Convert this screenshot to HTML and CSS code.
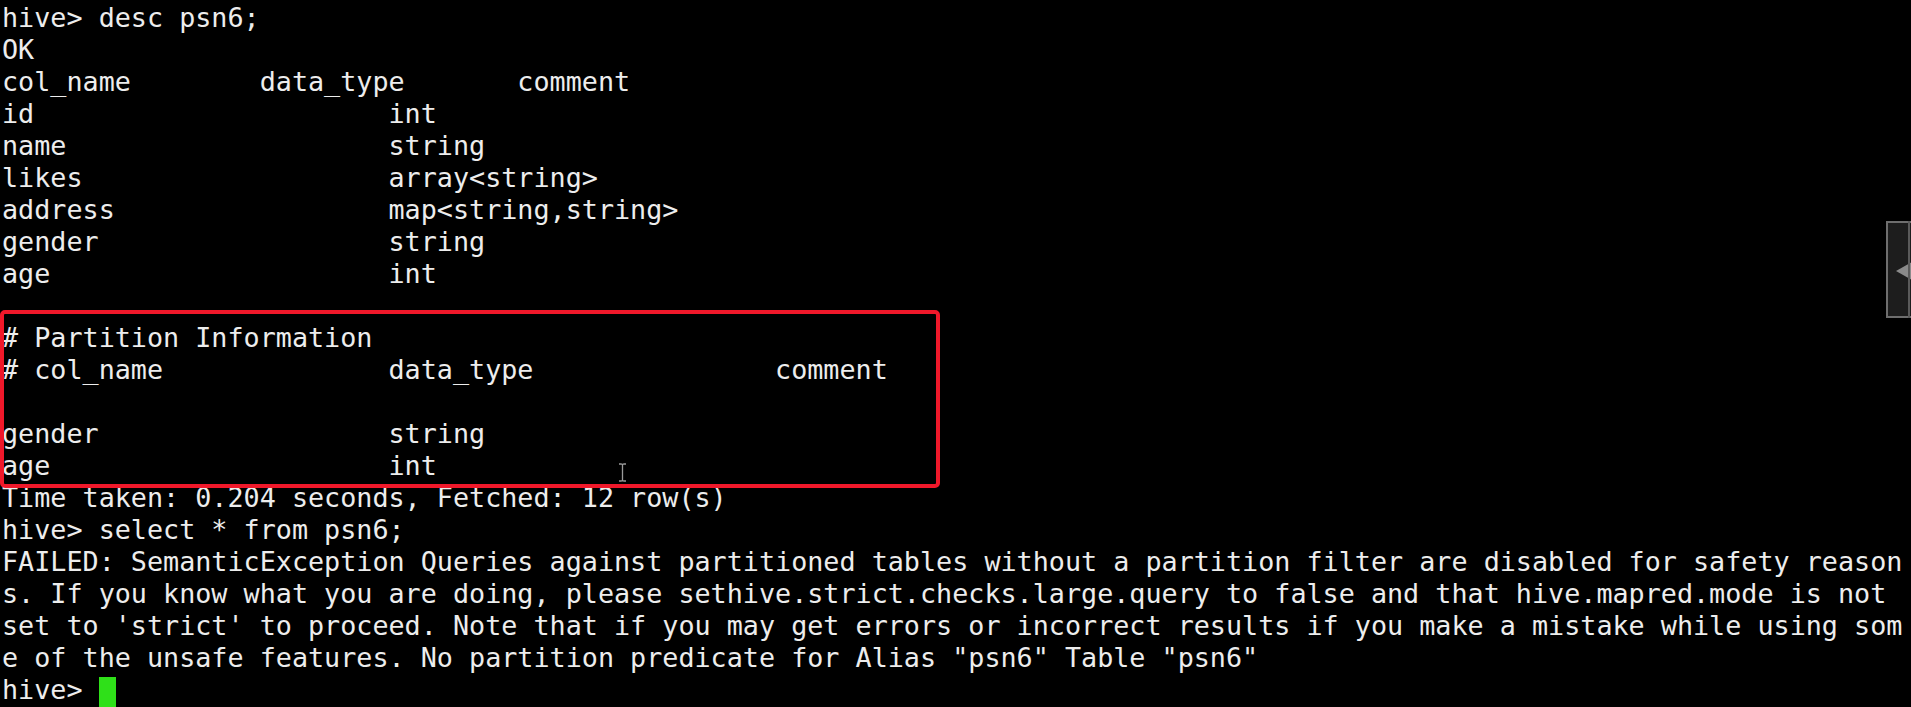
FILE: index.html
```html
<!DOCTYPE html>
<html lang="en">
<head>
<meta charset="utf-8">
<title>hive terminal</title>
<link rel="stylesheet" href="styles.css">
</head>
<body>
<div class="term">
<pre class="out">hive&gt; desc psn6;
OK
col_name        data_type       comment
id                      int
name                    string
likes                   array&lt;string&gt;
address                 map&lt;string,string&gt;
gender                  string
age                     int

# Partition Information
# col_name              data_type               comment

gender                  string
age                     int
Time taken: 0.204 seconds, Fetched: 12 row(s)
hive&gt; select * from psn6;
FAILED: SemanticException Queries against partitioned tables without a partition filter are disabled for safety reason
s. If you know what you are doing, please sethive.strict.checks.large.query to false and that hive.mapred.mode is not
set to 'strict' to proceed. Note that if you may get errors or incorrect results if you make a mistake while using som
e of the unsafe features. No partition predicate for Alias "psn6" Table "psn6"
hive&gt; <span class="cursor"></span></pre>
<div class="highlight"></div>
<svg class="ibeam" width="9" height="19" viewBox="0 0 9 19"><path d="M1 1h2.5M5.5 1H8M4.5 1.5v16M1 18h2.5M5.5 18H8M3.5 1.2c.6 0 1 .3 1 .8M5.5 1.2c-.6 0-1 .3-1 .8M3.5 17.8c.6 0 1-.3 1-.8M5.5 17.8c-.6 0-1-.3-1-.8" stroke="#9a9a9a" stroke-width="1.3" fill="none"/></svg>
<div class="sidetab"><span class="arrow"></span></div>
</div>
</body>
</html>
```
FILE: styles.css
```css
html, body {
  margin: 0;
  padding: 0;
  background: #000;
  overflow: hidden;
}
.term {
  position: relative;
  width: 1911px;
  height: 707px;
  background: #000;
  overflow: hidden;
}
.out {
  margin: 0;
  padding: 2px 0 0 2px;
  font-family: "DejaVu Sans Mono", monospace;
  font-size: 26.75px;
  line-height: 32px;
  color: #ededed;
  white-space: pre;
}
.cursor {
  display: inline-block;
  width: 17px;
  height: 32px;
  margin-top: 3px;
  vertical-align: top;
  background: #2fe019;
}
.highlight {
  position: absolute;
  left: 0;
  top: 310px;
  width: 940px;
  height: 178px;
  box-sizing: border-box;
  border: 4px solid #f0182a;
  border-radius: 5px;
}
.ibeam {
  position: absolute;
  left: 618px;
  top: 463px;
}
.sidetab {
  position: absolute;
  left: 1886px;
  top: 221px;
  width: 30px;
  height: 97px;
  box-sizing: border-box;
  border: 2px solid #6e6e6e;
  background: #1d1d1d;
}
.sidetab::after {
  content: "";
  position: absolute;
  left: 20px;
  top: -2px;
  width: 2px;
  height: 97px;
  background: #5a5a5a;
}
.arrow {
  position: absolute;
  left: 8px;
  top: 39px;
  width: 0;
  height: 0;
  border-top: 9px solid transparent;
  border-bottom: 9px solid transparent;
  border-right: 16px solid #8a8a8a;
}
```
